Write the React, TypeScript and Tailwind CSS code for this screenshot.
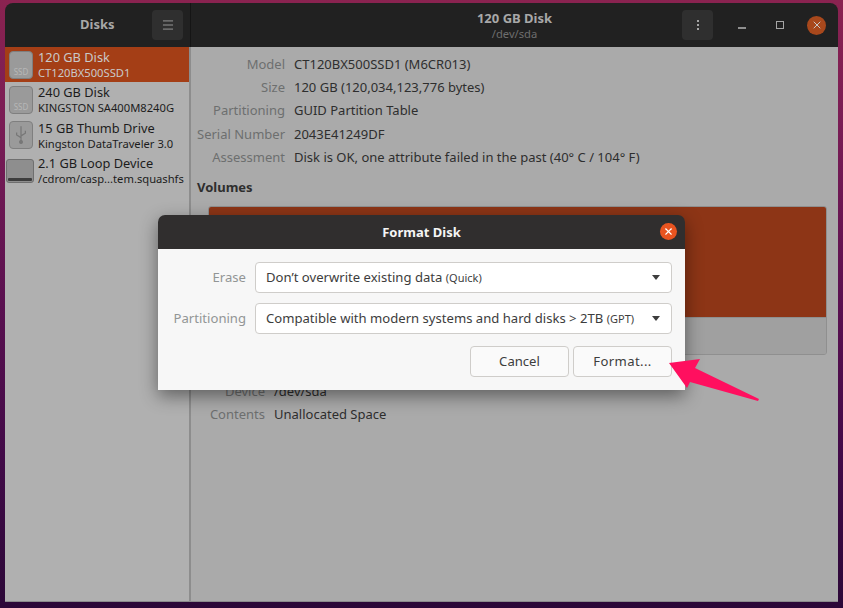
import { Menu, X } from 'lucide-react'

const font = { fontFamily: '"Noto Sans", "Open Sans", sans-serif' }

const disks = [
  { name: '120 GB Disk', sub: 'CT120BX500SSD1', kind: 'ssd', active: true },
  { name: '240 GB Disk', sub: 'KINGSTON SA400M8240G', kind: 'ssd', active: false },
  { name: '15 GB Thumb Drive', sub: 'Kingston DataTraveler 3.0', kind: 'usb', active: false },
  { name: '2.1 GB Loop Device', sub: '/cdrom/casp...tem.squashfs', kind: 'loop', active: false },
]

const details = [
  ['Model', 'CT120BX500SSD1 (M6CR013)'],
  ['Size', '120 GB (120,034,123,776 bytes)'],
  ['Partitioning', 'GUID Partition Table'],
  ['Serial Number', '2043E41249DF'],
  ['Assessment', 'Disk is OK, one attribute failed in the past (40° C / 104° F)'],
]

const DiskIcon = ({ kind }: { kind: string }) => {
  if (kind === 'loop') {
    return (
      <div className="-ml-[3px] flex h-[24px] w-[28px] shrink-0 flex-col justify-end rounded-[3px] border border-[#6f6f6f] bg-[#8e8e8e] p-[1px]">
        <div className="h-[3px] rounded-[1px] bg-[#3d3d3d]" />
      </div>
    )
  }
  return (
    <div className="flex h-[28px] w-[24px] shrink-0 flex-col items-center justify-end rounded-[4px] border border-[#7f7f7f] bg-[#9a9a9a]">
      {kind === 'ssd' ? (
        <span className="text-[8px] leading-[12px] text-[#b7b7b7]">SSD</span>
      ) : (
        <svg viewBox="0 0 16 22" className="mb-[3px] h-[20px] w-[14px]" fill="none" stroke="#777" strokeWidth="1.4">
          <path d="M8 1v19M3 8v3l5 3M13 6v3l-5 3" />
          <circle cx="8" cy="19" r="1.6" fill="#777" />
        </svg>
      )}
    </div>
  )
}

const Select = ({ label, value, hint }: { label: string; value: string; hint: string }) => (
  <div className="flex items-center">
    <span className="w-[89px] shrink-0 whitespace-nowrap pr-[9px] text-right text-[13.1px] text-[#929595]">{label}</span>
    <div className="flex h-[31px] flex-1 items-center justify-between rounded-[4px] border border-[#cfcdca] bg-white pl-[10px] pr-[11px] text-[13.1px] text-[#3d3d3d]">
      <span className="pt-[1px]">
        {value} <span className="text-[11px]">{hint}</span>
      </span>
      <div className="h-0 w-0 border-x-[4.5px] border-t-[5px] border-x-transparent border-t-[#3d3d3d]" />
    </div>
  </div>
)

export default function App() {
  return (
    <div
      className="relative h-[608px] w-[843px] overflow-hidden bg-[linear-gradient(180deg,#8a2350_0%,#7a1d55_20%,#5a1050_50%,#420a48_75%,#2c0838_100%)] pb-[6px] pl-[5px] pr-[5px] pt-[3px]"
      style={font}
    >
      <div className="flex h-full flex-col overflow-hidden rounded-t-[8px]">
        {/* Header bar */}
        <div className="flex h-[44px] shrink-0 bg-[#212121]">
          <div className="flex w-[186px] items-center border-r border-[#151515] pl-[75px]">
            <span className="w-[36px] text-[13px] font-bold text-[#a8a8a8]">Disks</span>
            <div className="ml-[36px] flex h-[30px] w-[31px] items-center justify-center rounded-[4px] bg-[#2f2f2f]">
              <Menu className="h-[14px] w-[14px] text-[#a5a5a5]" strokeWidth={1.5} />
            </div>
          </div>
          <div className="relative flex flex-1 items-center justify-center">
            <div className="text-center">
              <div className="text-[13px] font-bold leading-[17px] text-[#a8a8a8]">120 GB Disk</div>
              <div className="text-[11.2px] leading-[14px] text-[#6e6e6e]">/dev/sda</div>
            </div>
            <div className="absolute right-[12px] flex items-center">
              <div className="flex h-[30px] w-[31px] items-center justify-center rounded-[4px] bg-[#2f2f2f]">
                <div className="flex flex-col gap-[2px]">
                  <div className="h-[2px] w-[2px] bg-[#a5a5a5]" />
                  <div className="h-[2px] w-[2px] bg-[#a5a5a5]" />
                  <div className="h-[2px] w-[2px] bg-[#a5a5a5]" />
                </div>
              </div>
              <div className="ml-[25px] h-[2px] w-[8px] translate-y-[3px] bg-[#8f8f8f]" />
              <div className="ml-[30px] h-[8px] w-[8px] border border-[#a5a5a5]" />
              <div className="ml-[23px] flex h-[19px] w-[19px] items-center justify-center rounded-full bg-[#a8481c]">
                <X className="h-[12px] w-[12px] text-[#c9c9c9]" strokeWidth={2} />
              </div>
            </div>
          </div>
        </div>

        <div className="flex flex-1 border-b border-[#8c8c8c]">
          {/* Sidebar */}
          <div className="w-[186px] shrink-0 border-r-2 border-[#8d8d8d] bg-[#b0b0b0]">
            {disks.map((disk) => (
              <div
                key={disk.name}
                className={`flex h-[35.3px] items-center gap-[5px] pl-[4px] ${disk.active ? 'bg-[#a43e16]' : ''}`}
              >
                <div className="flex w-[24px] shrink-0 justify-center">
                  <DiskIcon kind={disk.kind} />
                </div>
                <div className="min-w-0 whitespace-nowrap">
                  <div className={`text-[12.8px] leading-[17px] ${disk.active ? 'text-[#c9c9c9]' : 'text-[#1c1c1c]'}`}>
                    {disk.name}
                  </div>
                  <div className={`text-[11.2px] leading-[14px] ${disk.active ? 'text-[#c9c9c9]' : 'text-[#1c1c1c]'}`}>
                    {disk.sub}
                  </div>
                </div>
              </div>
            ))}
          </div>

          {/* Main panel */}
          <div className="flex-1 bg-[#aaaaaa] pl-[6px] pr-[11px] pt-[6px]">
            <div className="flex flex-col">
              {details.map(([label, value]) => (
                <div key={label} className="flex h-[23.3px] items-center text-[13px]">
                  <span className="w-[88px] shrink-0 whitespace-nowrap text-right text-[#6d6f6f]">{label}</span>
                  <span className="ml-[9px] whitespace-nowrap text-[#2e2e2e]">{value}</span>
                </div>
              ))}
            </div>
            <div className="mt-[8px] text-[13px] font-bold leading-[20px] text-[#2e2e2e]">Volumes</div>
            <div className="ml-[11px] mt-[9px] h-[149px] overflow-hidden rounded-[3px] border border-[#8f8f8f]">
              <div className="h-[110px] bg-[#8d3516]" />
              <div className="h-full border-t border-[#8f8f8f] bg-[#a0a0a0]" />
            </div>
            <div className="ml-[11px] mt-[25px] flex flex-col">
              <div className="flex h-[23px] items-center text-[13px]">
                <span className="w-[57px] shrink-0 text-right text-[#6d6f6f]">Device</span>
                <span className="ml-[9px] text-[#2e2e2e]">/dev/sda</span>
              </div>
              <div className="flex h-[23px] items-center text-[13px]">
                <span className="w-[57px] shrink-0 text-right text-[#6d6f6f]">Contents</span>
                <span className="ml-[9px] text-[#2e2e2e]">Unallocated Space</span>
              </div>
            </div>
          </div>
        </div>
      </div>

      {/* Format dialog */}
      <div className="absolute left-[158px] top-[215px] w-[527px] overflow-hidden rounded-t-[7px] shadow-[0_6px_18px_rgba(0,0,0,0.45)]">
        <div className="relative flex h-[34px] items-center justify-center bg-[#302e2e]">
          <span className="pt-[1px] text-[13px] font-bold text-[#f5f5f5]">Format Disk</span>
          <div className="absolute right-[8px] top-[8px] flex h-[17px] w-[17px] items-center justify-center rounded-full bg-[#e95420]">
            <X className="h-[11px] w-[11px] text-white" strokeWidth={2.5} />
          </div>
        </div>
        <div className="flex h-[141px] flex-col bg-[#f7f7f7] pl-[8px] pr-[13px] pt-[13px]">
          <div className="flex flex-col gap-[10px]">
            <Select label="Erase" value="Don’t overwrite existing data" hint="(Quick)" />
            <Select label="Partitioning" value="Compatible with modern systems and hard disks > 2TB" hint="(GPT)" />
          </div>
          <div className="mt-[12px] flex justify-end gap-[4px]">
            <div className="flex h-[31px] w-[99px] items-center justify-center rounded-[4px] border border-[#cfcdca] bg-[#fafafa] text-[13.1px] text-[#3d3d3d]">
              Cancel
            </div>
            <div className="flex h-[31px] w-[99px] items-center justify-center rounded-[4px] border border-[#cfcdca] bg-[#fafafa] text-[13.1px] tracking-[0.4px] text-[#3d3d3d]">
              Format...
            </div>
          </div>
        </div>
      </div>

      {/* Callout arrow */}
      <svg viewBox="0 0 843 608" className="pointer-events-none absolute left-0 top-0 h-[608px] w-[843px]">
        <polygon points="669,363 700,359 695,368 759,399 758,401 690,382 687,388" fill="#ff0f5f" />
      </svg>
    </div>
  )
}
